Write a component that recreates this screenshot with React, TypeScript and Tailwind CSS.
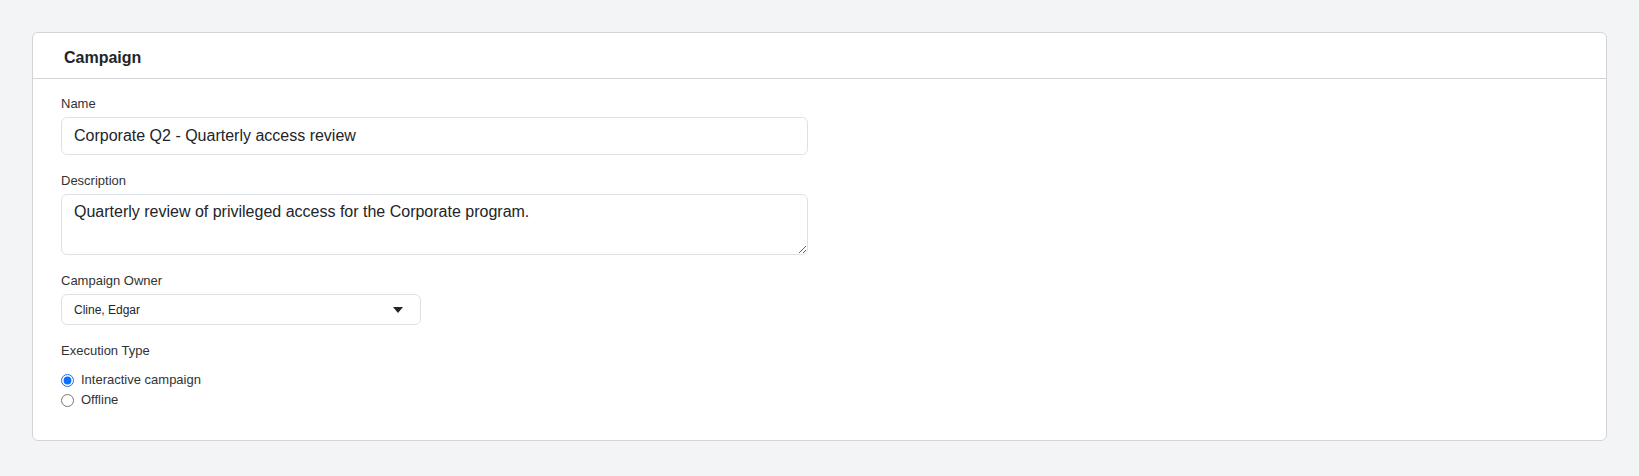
import { useState } from "react";

const labelClass = "block text-[13px] leading-[19px] text-[#333333] mb-[4px]";

const CampaignForm = () => {
  const [execution, setExecution] = useState("interactive");

  return (
    <div className="min-h-screen bg-[#f3f4f6] p-8 font-['Liberation_Sans',Arial,sans-serif]">
      <div className="bg-white border border-[#d4d4d8] rounded-md">
        {/* Header */}
        <div className="h-[46px] pt-[5px] flex items-center px-[31px] border-b border-[#d4d4d8]">
          <h2 className="text-base font-bold text-[#212529]">Campaign</h2>
        </div>

        {/* Body */}
        <div className="px-7 pt-[15px] pb-[30px]">
          <div className="mb-4">
            <label className={labelClass}>Name</label>
            <input
              type="text"
              readOnly
              value="Corporate Q2 - Quarterly access review"
              className="block w-[747px] h-[38px] px-3 border border-[#dee2e6] rounded-md text-base text-[#212529] outline-none"
            />
          </div>

          <div className="mb-4">
            <label className={labelClass}>Description</label>
            <textarea
              readOnly
              value="Quarterly review of privileged access for the Corporate program."
              className="block w-[747px] h-[61px] px-3 py-[5px] border border-[#dee2e6] rounded-md text-base leading-6 text-[#212529] outline-none"
            />
          </div>

          <div className="mb-4">
            <label className={labelClass}>Campaign Owner</label>
            <div className="w-[360px] h-[31px] flex items-center justify-between pl-3 pr-[17px] border border-[#dee2e6] rounded-md">
              <span className="text-xs text-[#212529]">Cline, Edgar</span>
              <svg width="10" height="6" viewBox="0 0 10 6">
                <path d="M0 0h10L5 6z" fill="#212529" />
              </svg>
            </div>
          </div>

          <div>
            <label className="block text-[13px] leading-[19px] text-[#333333] mb-[10px]">Execution Type</label>
            <div className="flex flex-col">
              <label className="flex items-center gap-[7px] h-5 text-[13px] text-[#333333]">
                <input
                  type="radio"
                  name="execution"
                  checked={execution === "interactive"}
                  onChange={() => setExecution("interactive")}
                  className="w-[13px] h-[13px] m-0 accent-[#0b6efd]"
                />
                Interactive campaign
              </label>
              <label className="flex items-center gap-[7px] h-5 text-[13px] text-[#333333]">
                <input
                  type="radio"
                  name="execution"
                  checked={execution === "offline"}
                  onChange={() => setExecution("offline")}
                  className="w-[13px] h-[13px] m-0 accent-[#0b6efd]"
                />
                Offline
              </label>
            </div>
          </div>
        </div>
      </div>
    </div>
  );
};

export default function App() {
  return <CampaignForm />;
}
